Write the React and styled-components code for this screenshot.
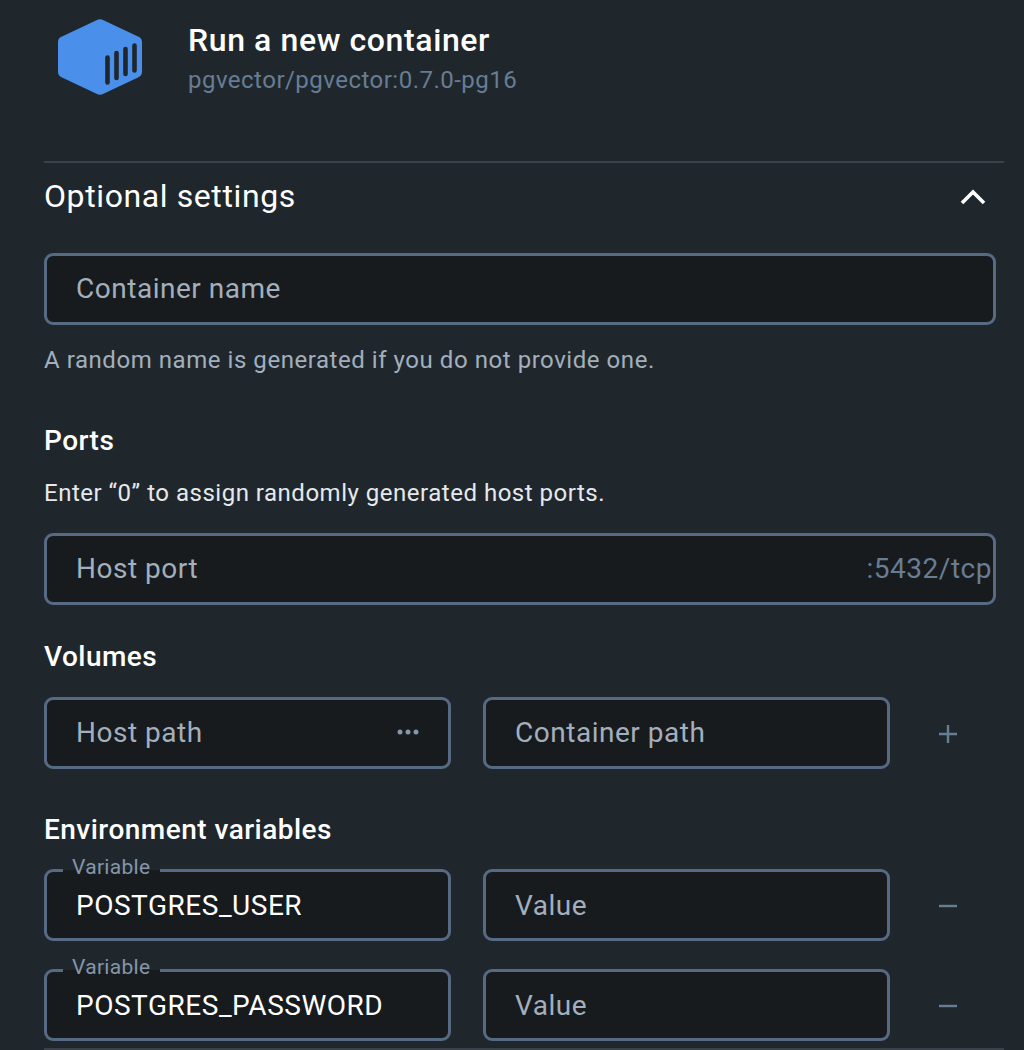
import React from "react";
import styled, { createGlobalStyle } from "styled-components";

const Global = createGlobalStyle`
  html, body { margin: 0; padding: 0; background: #1f272d; }
  body { font-family: Roboto, "Liberation Sans", sans-serif; overflow: hidden; height: 1050px; }
`;

const Page = styled.div`
  width: 1024px;
  height: 1050px;
  overflow: hidden;
  box-sizing: border-box;
  padding-left: 44px;
  background: #1f272d;
  color: #fff;
`;

const Header = styled.header`
  display: flex;
  align-items: flex-start;
  box-sizing: border-box;
  padding: 19px 0 0 13px;
  width: 960px;
  height: 163px;
  border-bottom: 2px solid #3a4149;
`;

const Logo = styled.svg`
  width: 86px;
  height: 76px;
  flex: none;
  display: block;
`;

const HeaderText = styled.div`
  margin-left: 45px;
  padding-top: 3px;
`;

const Title = styled.h1`
  margin: 0;
  font-size: 32px;
  line-height: 36px;
  font-weight: 500;
  letter-spacing: 0.6px;
  color: #fff;
`;

const Subtitle = styled.div`
  margin-top: 6px;
  font-size: 24px;
  line-height: 32px;
  letter-spacing: 0.48px;
  color: #677d94;
`;

const Section = styled.div`
  width: 952px;
`;

const AccordionHead = styled.div`
  width: 960px;
  height: 68px;
  display: flex;
  align-items: center;
  justify-content: space-between;
  padding-bottom: 2px;
  box-sizing: border-box;
  font-size: 32px;
  letter-spacing: 0.6px;
  margin-bottom: 22px;
`;

const Chevron = styled.svg`
  width: 26px;
  height: 16px;
  margin-right: 18px;
  margin-top: 2px;
`;

const FieldBox = styled.div`
  position: relative;
  box-sizing: border-box;
  flex: ${(p) => (p.$fixed ? "none" : "1")};
  width: ${(p) => (p.$fixed ? `${p.$fixed}px` : "auto")};
  height: 72px;
  margin-left: ${(p) => p.$left || 0}px;
  display: flex;
  align-items: center;
  justify-content: space-between;
  padding-left: 29px;
  padding-bottom: ${(p) => (p.$flush ? 0 : 2)}px;
  background: #171b1e;
  border: 3px solid #566a83;
  border-radius: 9px;
  font-size: 28px;
  letter-spacing: 0.52px;
  color: ${(p) => (p.$value ? "#fff" : "#a3afbc")};
`;

const Suffix = styled.span`
  color: #677d94;
  margin-right: 1px;
`;

const Dots = styled.svg`
  width: 22px;
  height: 6px;
  margin-right: 29px;
`;

const Floating = styled.span`
  position: absolute;
  left: 16px;
  top: -18px;
  padding: 0 10px 0 9px;
  font-size: 21px;
  line-height: 26px;
  letter-spacing: 0.3px;
  color: #8496a9;
  background: linear-gradient(#1f272d 0 16px, #171b1e 16px);
`;

const Help = styled.p`
  margin: 20px 0 0;
  font-size: 24px;
  line-height: 30px;
  letter-spacing: 0.55px;
  color: #a3afbc;
`;

const Heading = styled.h2`
  margin: ${(p) => p.$top}px 0 0;
  font-size: 28px;
  line-height: 34px;
  font-weight: 500;
  letter-spacing: 0.48px;
  color: #fff;
`;

const Note = styled.p`
  margin: 20px 0 25px;
  font-size: 24px;
  line-height: 30px;
  letter-spacing: 0.51px;
  color: #e6e9ec;
`;

const Row = styled.div`
  display: flex;
  align-items: center;
  margin-top: ${(p) => p.$top}px;
`;

const ActionIcon = styled.svg`
  width: 22px;
  height: 22px;
  margin-left: 47px;
  margin-top: 2px;
  flex: none;
`;

const BottomRule = styled.div`
  width: 960px;
  height: 2px;
  margin-top: 7px;
  background: #3a4149;
`;

const Plus = () => (
  <ActionIcon viewBox="0 0 22 22">
    <path d="M11 2v18M2 11h18" stroke="#677d94" strokeWidth="2.4" fill="none" />
  </ActionIcon>
);
const Minus = () => (
  <ActionIcon viewBox="0 0 22 22">
    <path d="M2 11h18" stroke="#677d94" strokeWidth="2.4" fill="none" />
  </ActionIcon>
);

export default function App() {
  return (
    <>
      <Global />
      <Page>
        <Header>
          <Logo viewBox="0 0 86 76">
            <path
              d="M39.5 1.2a8 8 0 0 1 7 0L81 17.6a6 6 0 0 1 4 5.6v29.6a6 6 0 0 1-4 5.6L46.5 74.8a8 8 0 0 1-7 0L5 58.4a6 6 0 0 1-4-5.6V23.2a6 6 0 0 1 4-5.6z"
              fill="#4a8fe9"
            />
            <path
              d="M50.5 38.5v25M59.5 34v25M68.5 30v25M77.5 26.5v25"
              stroke="#1f272d"
              strokeWidth="4.6"
              strokeLinecap="round"
              fill="none"
            />
          </Logo>
          <HeaderText>
            <Title>Run a new container</Title>
            <Subtitle>pgvector/pgvector:0.7.0-pg16</Subtitle>
          </HeaderText>
        </Header>
        <AccordionHead>
          <span>Optional settings</span>
          <Chevron viewBox="0 0 26 16">
            <path d="M2 14L13 3l11 11" stroke="#fff" strokeWidth="3.6" fill="none" />
          </Chevron>
        </AccordionHead>
        <Section>
          <FieldBox>Container name</FieldBox>
          <Help>A random name is generated if you do not provide one.</Help>
          <Heading $top={49}>Ports</Heading>
          <Note>Enter “0” to assign randomly generated host ports.</Note>
          <FieldBox>
            Host port<Suffix>:5432/tcp</Suffix>
          </FieldBox>
          <Heading $top={35}>Volumes</Heading>
          <Row $top={23}>
            <FieldBox $fixed={407}>
              Host path
              <Dots viewBox="0 0 22 6">
                <circle cx="3" cy="3" r="2.5" fill="#8496a9" />
                <circle cx="11" cy="3" r="2.5" fill="#8496a9" />
                <circle cx="19" cy="3" r="2.5" fill="#8496a9" />
              </Dots>
            </FieldBox>
            <FieldBox $fixed={407} $left={32}>Container path</FieldBox>
            <Plus />
          </Row>
          <Heading $top={44}>Environment variables</Heading>
          <Row $top={22}>
            <FieldBox $fixed={407} $value $flush>
              <Floating>Variable</Floating>POSTGRES_USER
            </FieldBox>
            <FieldBox $fixed={407} $left={32} $flush>Value</FieldBox>
            <Minus />
          </Row>
          <Row $top={28}>
            <FieldBox $fixed={407} $value $flush>
              <Floating>Variable</Floating>POSTGRES_PASSWORD
            </FieldBox>
            <FieldBox $fixed={407} $left={32} $flush>Value</FieldBox>
            <Minus />
          </Row>
          <BottomRule />
        </Section>
      </Page>
    </>
  );
}
